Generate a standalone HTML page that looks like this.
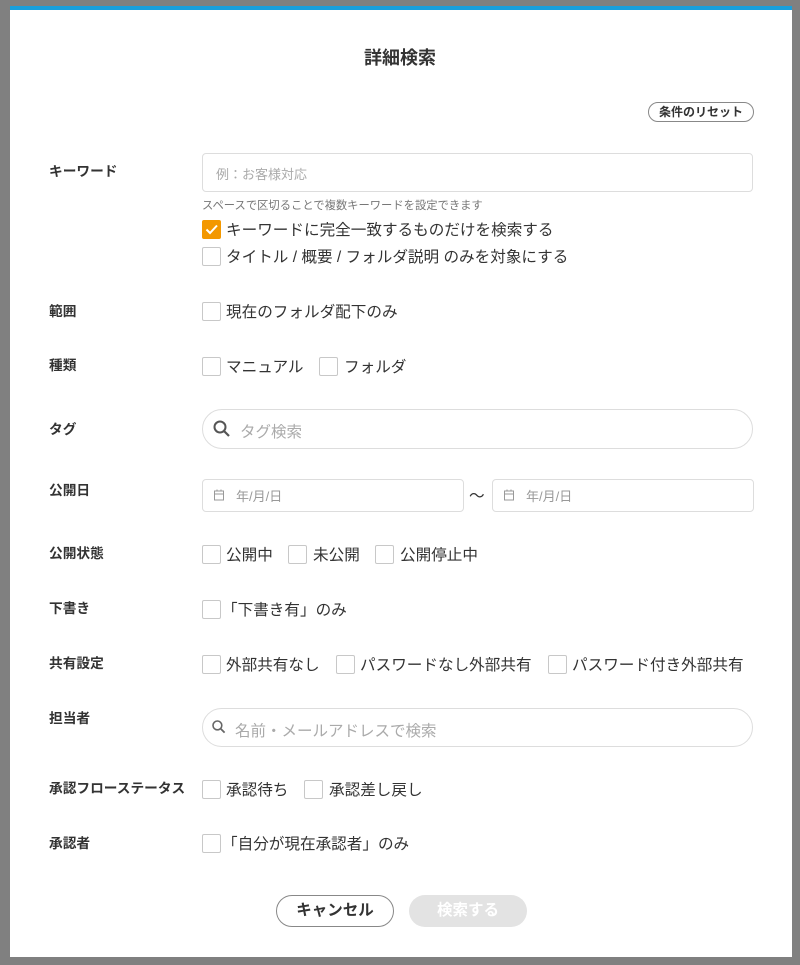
<!DOCTYPE html>
<html><head><meta charset="utf-8"><style>
*{box-sizing:border-box;margin:0;padding:0}
body{width:800px;height:965px;background:#808080;position:relative;overflow:hidden;font-family:"Liberation Sans","Noto Sans CJK JP",sans-serif;color:#333}
.modal{position:absolute;left:10px;top:6px;width:782px;height:951px;background:#fff;border-top:4px solid #1a9fdc}
.a{position:absolute}
.lbl{position:absolute;left:49px;font-size:13.7px;font-weight:bold;color:#333;line-height:16px;white-space:nowrap}
.inp{position:absolute;left:202px;width:551px;border:1px solid #ddd;border-radius:4px;background:#fff}
.ph{position:absolute;color:#aaa;font-size:14px}
.cb{position:absolute;width:19px;height:19px;border:1px solid #c8c8c8;border-radius:2px;background:#fff}
.t{position:absolute;font-size:15.6px;color:#333;line-height:19px;white-space:nowrap;margin-top:1px}
</style></head><body>
<div class="modal"></div>
<div class="a" style="left:0;width:800px;top:47px;text-align:center;font-size:18px;font-weight:bold;line-height:22px">詳細検索</div>
<div class="a" style="left:648px;top:102px;width:106px;height:20px;border:1px solid #888;border-radius:10px;font-size:12px;font-weight:bold;text-align:center;line-height:18px">条件のリセット</div>

<div class="lbl" style="top:164px">キーワード</div>
<div class="inp" style="top:153px;height:39px"></div>
<div class="ph" style="left:216px;top:164px;font-size:13px">例：お客様対応</div>
<div class="a" style="left:202px;top:197px;font-size:11.3px;color:#777">スペースで区切ることで複数キーワードを設定できます</div>
<div class="cb" style="left:202px;top:220px;background:#f39800;border-color:#f39800"><svg width="17" height="17" viewBox="0 0 17 17"><path d="M3.5 8.5l3.5 3.5 7-7.5" stroke="#fff" stroke-width="2" fill="none"/></svg></div>
<div class="t" style="left:226px;top:220px">キーワードに完全一致するものだけを検索する</div>
<div class="cb" style="left:202px;top:247px"></div>
<div class="t" style="left:226px;top:247px">タイトル / 概要 / フォルダ説明 のみを対象にする</div>

<div class="lbl" style="top:304px">範囲</div>
<div class="cb" style="left:202px;top:302px"></div><div class="t" style="left:226px;top:302px">現在のフォルダ配下のみ</div>

<div class="lbl" style="top:358px">種類</div>
<div class="cb" style="left:202px;top:357px"></div><div class="t" style="left:226px;top:357px">マニュアル</div>
<div class="cb" style="left:319px;top:357px"></div><div class="t" style="left:344px;top:357px">フォルダ</div>

<div class="lbl" style="top:422px">タグ</div>
<div class="inp" style="top:409px;height:40px;border-radius:20px"></div>
<svg class="a" style="left:212px;top:419px" width="20" height="20" viewBox="0 0 20 20"><circle cx="8" cy="8" r="5.5" stroke="#555" stroke-width="2" fill="none"/><path d="M12 12l5 5" stroke="#555" stroke-width="2.2"/></svg>
<div class="ph" style="left:240px;top:420px;font-size:15.5px">タグ検索</div>

<div class="lbl" style="top:483px">公開日</div>
<div class="inp" style="top:479px;height:33px;width:262px"></div>
<div class="inp" style="top:479px;height:33px;left:492px;width:262px"></div>
<svg class="a" style="left:213px;top:489px" width="12" height="12" viewBox="0 0 12 12"><rect x="1.5" y="2" width="9" height="9" fill="none" stroke="#999"/><path d="M1.5 5h9M4 0.5v2M8 0.5v2" stroke="#999"/></svg>
<svg class="a" style="left:503px;top:489px" width="12" height="12" viewBox="0 0 12 12"><rect x="1.5" y="2" width="9" height="9" fill="none" stroke="#999"/><path d="M1.5 5h9M4 0.5v2M8 0.5v2" stroke="#999"/></svg>
<div class="ph" style="left:236px;top:486px;font-size:13px;color:#999">年/月/日</div>
<div class="ph" style="left:526px;top:486px;font-size:13px;color:#999">年/月/日</div>
<div class="t" style="left:469px;top:486px">〜</div>

<div class="lbl" style="top:546px">公開状態</div>
<div class="cb" style="left:202px;top:545px"></div><div class="t" style="left:226px;top:545px">公開中</div>
<div class="cb" style="left:288px;top:545px"></div><div class="t" style="left:313px;top:545px">未公開</div>
<div class="cb" style="left:375px;top:545px"></div><div class="t" style="left:400px;top:545px">公開停止中</div>

<div class="lbl" style="top:601px">下書き</div>
<div class="cb" style="left:202px;top:600px"></div><div class="t" style="left:222px;top:600px">「下書き有」のみ</div>

<div class="lbl" style="top:656px">共有設定</div>
<div class="cb" style="left:202px;top:655px"></div><div class="t" style="left:226px;top:655px">外部共有なし</div>
<div class="cb" style="left:336px;top:655px"></div><div class="t" style="left:360px;top:655px">パスワードなし外部共有</div>
<div class="cb" style="left:548px;top:655px"></div><div class="t" style="left:572px;top:655px">パスワード付き外部共有</div>

<div class="lbl" style="top:711px">担当者</div>
<div class="inp" style="top:708px;height:39px;border-radius:20px"></div>
<svg class="a" style="left:211px;top:719px" width="16" height="16" viewBox="0 0 20 20"><circle cx="8" cy="8" r="5.5" stroke="#666" stroke-width="2" fill="none"/><path d="M12 12l5 5" stroke="#666" stroke-width="2.2"/></svg>
<div class="ph" style="left:235px;top:719px;font-size:15.5px">名前・メールアドレスで検索</div>

<div class="lbl" style="top:781px">承認フローステータス</div>
<div class="cb" style="left:202px;top:780px"></div><div class="t" style="left:226px;top:780px">承認待ち</div>
<div class="cb" style="left:304px;top:780px"></div><div class="t" style="left:329px;top:780px">承認差し戻し</div>

<div class="lbl" style="top:836px">承認者</div>
<div class="cb" style="left:202px;top:834px"></div><div class="t" style="left:222px;top:834px">「自分が現在承認者」のみ</div>

<div class="a" style="left:276px;top:895px;width:118px;height:32px;border:1px solid #888;border-radius:16px;text-align:center;line-height:30px;font-size:15.5px;font-weight:bold">キャンセル</div>
<div class="a" style="left:409px;top:895px;width:118px;height:32px;background:#e3e3e3;border-radius:16px;text-align:center;line-height:32px;font-size:15.5px;font-weight:bold;color:#fff">検索する</div>
</body></html>
